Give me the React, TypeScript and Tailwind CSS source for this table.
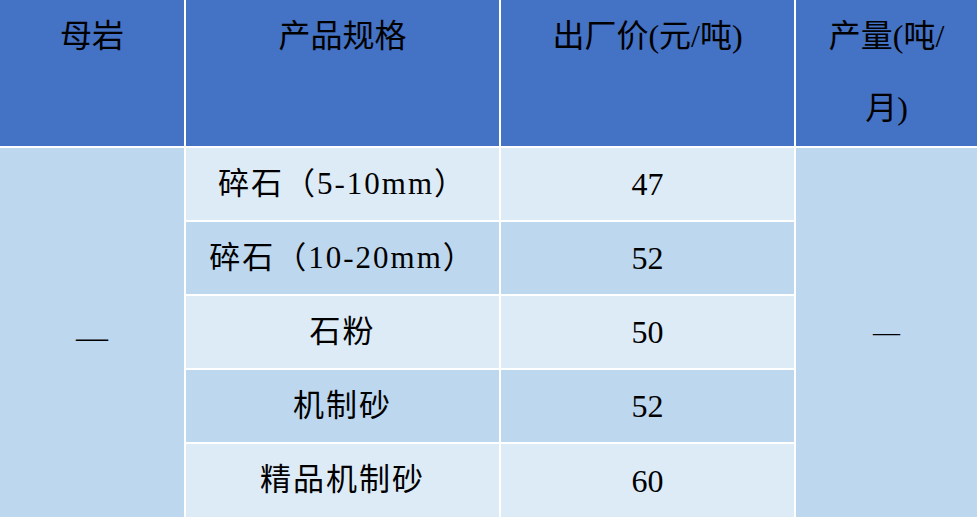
const rows = [
  { spec: '碎石（5-10mm）', price: '47', bg: 'bg-[#ddebf7]' },
  { spec: '碎石（10-20mm）', price: '52', bg: 'bg-[#bdd7ee]' },
  { spec: '石粉', price: '50', bg: 'bg-[#ddebf7]' },
  { spec: '机制砂', price: '52', bg: 'bg-[#bdd7ee]' },
  { spec: '精品机制砂', price: '60', bg: 'bg-[#ddebf7]' },
];

export default function App() {
  return (
    <div className="w-[977px] h-[517px] overflow-hidden bg-white text-black font-['Liberation_Serif','Times_New_Roman','Noto_Sans_CJK_SC',serif]">
      <div className="grid grid-cols-[184px_313px_293px_181px] grid-rows-[146px_72px_72px_72px_72px_73px] gap-[2px]">
        {/* 表头 */}
        <div className="bg-[#4472c4] text-center text-[32px] leading-[72px]">母岩</div>
        <div className="bg-[#4472c4] text-center text-[32px] leading-[72px]">产品规格</div>
        <div className="bg-[#4472c4] text-center text-[32px] leading-[72px]">出厂价(元/吨)</div>
        <div className="bg-[#4472c4] text-center text-[32px] leading-[72px]">
          产量(吨/
          <br />
          月)
        </div>

        {/* 母岩 合并单元格 */}
        <div className="row-start-2 row-span-5 col-start-1 bg-[#bdd7ee] flex items-center justify-center text-[32px] pt-[8px]">
          —
        </div>

        {rows.map((r, i) => (
          <div
            key={`s${i}`}
            className={`col-start-2 ${r.bg} flex items-center justify-center text-[31px] tracking-[2px]`}
            style={{ gridRowStart: i + 2 }}
          >
            {r.spec}
          </div>
        ))}
        {rows.map((r, i) => (
          <div
            key={`p${i}`}
            className={`col-start-3 ${r.bg} flex items-center justify-center text-[32px]`}
            style={{ gridRowStart: i + 2 }}
          >
            {r.price}
          </div>
        ))}

        {/* 产量 合并单元格 */}
        <div className="row-start-2 row-span-5 col-start-4 bg-[#bdd7ee] flex items-center justify-center text-[27px]">
          —
        </div>
      </div>
    </div>
  );
}
